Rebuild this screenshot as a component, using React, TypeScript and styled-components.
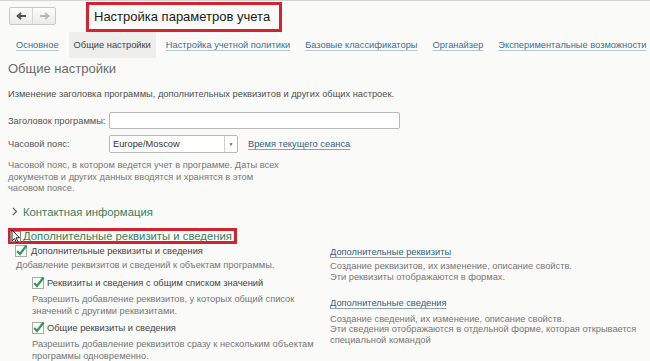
import React from 'react'
import styled, { createGlobalStyle } from 'styled-components'

const GlobalStyle = createGlobalStyle`
  html, body {
    margin: 0;
    padding: 0;
    background: #fafaf8;
  }
  body {
    font-family: 'Liberation Sans', Arial, sans-serif;
    color: #4d4d4d;
  }
`

// ===== header =====
const Page = styled.div`
  width: 650px;
  height: 361px;
  overflow: hidden;
  background: #fafaf8;
  border-top: 1px solid #d4d4d4;
  box-sizing: border-box;
`

const Header = styled.div`
  display: flex;
  align-items: center;
  height: 31px;
  padding-left: 9px;
  gap: 30px;
`

const NavGroup = styled.div`
  display: flex;
  height: 16px;
  border: 1px solid #c9c9c9;
  border-radius: 2px;
  background: linear-gradient(#fdfdfd, #ececec);
  margin-top: -1px;
`

const NavButton = styled.div<{ $disabled?: boolean }>`
  width: 22px;
  display: flex;
  align-items: center;
  justify-content: center;
  & + & {
    border-left: 1px solid #d6d6d6;
  }
`

const Title = styled.div`
  border: 3px solid #d2232f;
  padding: 4px 9px 5px 5px;
  font-size: 13px;
  line-height: 15px;
  color: #1a1a1a;
  white-space: nowrap;
`

const Tabs = styled.div`
  display: flex;
  align-items: stretch;
  height: 26px;
  padding-left: 11px;
`

const Tab = styled.div<{ $active?: boolean }>`
  display: flex;
  align-items: center;
  padding: 0 5px;
  margin-right: 5px;
  font-size: 9.3px;
  white-space: nowrap;
  color: ${(p) => (p.$active ? '#444' : '#3f6f8e')};
  background: ${(p) => (p.$active ? '#eeeeec' : 'transparent')};
  span {
    text-decoration: ${(p) => (p.$active ? 'none' : 'underline')};
    text-decoration-color: #b5c7d4;
    text-underline-offset: 2px;
  }
`

// ===== content =====
const Content = styled.div`
  padding: 0 8px;
`

const Heading = styled.div`
  font-size: 13px;
  line-height: 16px;
  color: #6a6a6a;
  margin-top: 3px;
`

const Lead = styled.div`
  font-size: 9.3px;
  line-height: 12px;
  margin-top: 11px;
  color: #505050;
  white-space: nowrap;
`

const FormGrid = styled.div`
  display: grid;
  grid-template-columns: 101px auto;
  row-gap: 6px;
  margin-top: 12px;
  align-items: center;
  font-size: 9.3px;
`

const Label = styled.div`
  color: #555;
  white-space: nowrap;
`

const Input = styled.div`
  width: 289px;
  height: 15px;
  border: 1px solid #b8b8b8;
  border-radius: 2px;
  background: #fff;
`

const Row = styled.div`
  display: flex;
  align-items: center;
  gap: 10px;
`

const Select = styled.div`
  width: 127px;
  height: 16px;
  display: flex;
  border: 1px solid #b8b8b8;
  border-radius: 2px;
  background: #fff;
`

const SelectValue = styled.div`
  flex: 1;
  padding-left: 3px;
  line-height: 16px;
  color: #333;
`

const SelectArrow = styled.div`
  width: 12px;
  border-left: 1px solid #cfcfcf;
  display: flex;
  align-items: center;
  justify-content: center;
  font-size: 5px;
  color: #666;
`

const Link = styled.span`
  color: #355f7f;
  text-decoration: underline;
  text-underline-offset: 2px;
  text-decoration-color: #8aa2b5;
  font-size: 9.3px;
  line-height: 12px;
  white-space: nowrap;
`

const Note = styled.div<{ $indent?: number; $lh?: number }>`
  font-size: 9.3px;
  line-height: ${(p) => p.$lh ?? 11.5}px;
  color: #777;
  white-space: nowrap;
  padding-left: ${(p) => p.$indent ?? 0}px;
`

const GroupTitle = styled.div`
  display: flex;
  align-items: center;
  gap: 5px;
  font-size: 11.3px;
  line-height: 14px;
  color: #3b7f58;
  margin-top: 10px;
  padding-left: 4px;
`

const Chevron = styled.svg`
  flex: none;
`

const Highlight = styled.div`
  position: relative;
  display: flex;
  align-items: center;
  box-sizing: border-box;
  width: 229px;
  height: 16px;
  border: 3px solid #d2232f;
  padding-left: 12px;
  margin-top: 9.5px;
  font-size: 11.3px;
  line-height: 10px;
  color: #3b7f58;
  white-space: nowrap;
`

const Cursor = styled.svg`
  position: absolute;
  left: -2px;
  top: -3px;
`

const Columns = styled.div`
  display: grid;
  grid-template-columns: 322px 1fr;
`

const Column = styled.div<{ $top?: number }>`
  display: flex;
  flex-direction: column;
  align-items: flex-start;
  margin-top: ${(p) => p.$top ?? 0}px;
`

const CheckRow = styled.label<{ $indent?: number; $gap?: number }>`
  display: flex;
  align-items: center;
  gap: ${(p) => p.$gap ?? 4}px;
  font-size: 9.3px;
  color: #444;
  padding-left: ${(p) => p.$indent ?? 0}px;
  height: 12px;
  white-space: nowrap;
`

const Box = styled.span`
  position: relative;
  width: 10px;
  height: 10px;
  border: 1px solid #a9a9a9;
  background: #fff;
  flex: none;
`

const Tick = styled.svg`
  position: absolute;
  left: -1px;
  top: -3px;
`

const Block = styled.div<{ $top: number }>`
  margin-top: ${(p) => p.$top}px;
`

const Check: React.FC<{ children: React.ReactNode; indent?: number; gap?: number }> = ({
  children,
  indent,
  gap
}) => (
  <CheckRow $indent={indent} $gap={gap}>
    <Box>
      <Tick width="13" height="14" viewBox="0 0 13 14">
        <path
          d="M2.2 8 L5 11 L11.5 2.5"
          fill="none"
          stroke="#2f9a52"
          strokeWidth="2.2"
        />
      </Tick>
    </Box>
    {children}
  </CheckRow>
)

const App: React.FC = () => {
  return (
    <>
      <GlobalStyle />
      <Page>
        <Header>
          <NavGroup>
            <NavButton>
              <svg width="11" height="8" viewBox="0 0 11 8">
                <path d="M10 4 H2.5 M5 1 L1.5 4 L5 7" fill="none" stroke="#555" strokeWidth="1.8" />
              </svg>
            </NavButton>
            <NavButton $disabled>
              <svg width="11" height="8" viewBox="0 0 11 8">
                <path d="M1 4 H8.5 M6 1 L9.5 4 L6 7" fill="none" stroke="#b8b8b8" strokeWidth="1.8" />
              </svg>
            </NavButton>
          </NavGroup>
          <Title>Настройка параметров учета</Title>
        </Header>

        <Tabs>
          <Tab><span>Основное</span></Tab>
          <Tab $active><span>Общие настройки</span></Tab>
          <Tab><span>Настройка учетной политики</span></Tab>
          <Tab><span>Базовые классификаторы</span></Tab>
          <Tab><span>Органайзер</span></Tab>
          <Tab><span>Экспериментальные возможности</span></Tab>
        </Tabs>

        <Content>
          <Heading>Общие настройки</Heading>
          <Lead>
            Изменение заголовка программы, дополнительных реквизитов и других
            общих настроек.
          </Lead>

          <FormGrid>
            <Label>Заголовок программы:</Label>
            <Input />
            <Label>Часовой пояс:</Label>
            <Row>
              <Select>
                <SelectValue>Europe/Moscow</SelectValue>
                <SelectArrow>▼</SelectArrow>
              </Select>
              <Link>Время текущего сеанса</Link>
            </Row>
          </FormGrid>

          <Block $top={7}>
            <Note>
              Часовой пояс, в котором ведется учет в программе. Даты всех
              <br />
              документов и других данных вводятся и хранятся в этом
              <br />
              часовом поясе.
            </Note>
          </Block>

          <GroupTitle>
            <Chevron width="6" height="9" viewBox="0 0 6 9">
              <path d="M1 1 L4.5 4.5 L1 8" fill="none" stroke="#3b7f58" strokeWidth="1.2" />
            </Chevron>
            Контактная информация
          </GroupTitle>

          <Highlight>
            <Cursor width="14" height="16" viewBox="0 0 14 16">
              <rect x="1.5" y="3.5" width="10" height="10" fill="#fff" stroke="#888" />
              <path
                d="M3 2 L3 13 L5.5 10.5 L7.5 14.5 L9 13.8 L7 9.8 L10.5 9.8 Z"
                fill="#fff"
                stroke="#222"
                strokeWidth="1"
              />
            </Cursor>
            Дополнительные реквизиты и сведения
          </Highlight>

          <Columns>
            <Column $top={1}>
              <Check indent={7}>Дополнительные реквизиты и сведения</Check>
              <Block $top={3}>
                <Note $indent={8}>
                  Добавление реквизитов и сведений к объектам программы.
                </Note>
              </Block>
              <Block $top={5}>
                <Check indent={24} gap={3}>
                  Реквизиты и сведения с общим списком значений
                </Check>
              </Block>
              <Block $top={4}>
                <Note $indent={24} $lh={12}>
                  Разрешить добавление реквизитов, у которых общий список
                  <br />
                  значений с другими реквизитами.
                </Note>
              </Block>
              <Block $top={5}>
                <Check indent={24} gap={3}>
                  Общие реквизиты и сведения
                </Check>
              </Block>
              <Block $top={4}>
                <Note $indent={24} $lh={12}>
                  Разрешить добавление реквизитов сразу к нескольким объектам
                  <br />
                  программы одновременно.
                </Note>
              </Block>
            </Column>

            <Column $top={2}>
              <Link>Дополнительные реквизиты</Link>
              <Block $top={2.5}>
                <Note $lh={11}>
                  Создание реквизитов, их изменение, описание свойств.
                  <br />
                  Эти реквизиты отображаются в формах.
                </Note>
              </Block>
              <Block $top={9.5}>
                <Link>Дополнительные сведения</Link>
              </Block>
              <Block $top={3.5}>
                <Note $lh={10.5}>
                  Создание сведений, их изменение, описание свойств.
                  <br />
                  Эти сведения отображаются в отдельной форме, которая
                  открывается
                  <br />
                  специальной командой
                </Note>
              </Block>
            </Column>
          </Columns>
        </Content>
      </Page>
    </>
  )
}

export default App
